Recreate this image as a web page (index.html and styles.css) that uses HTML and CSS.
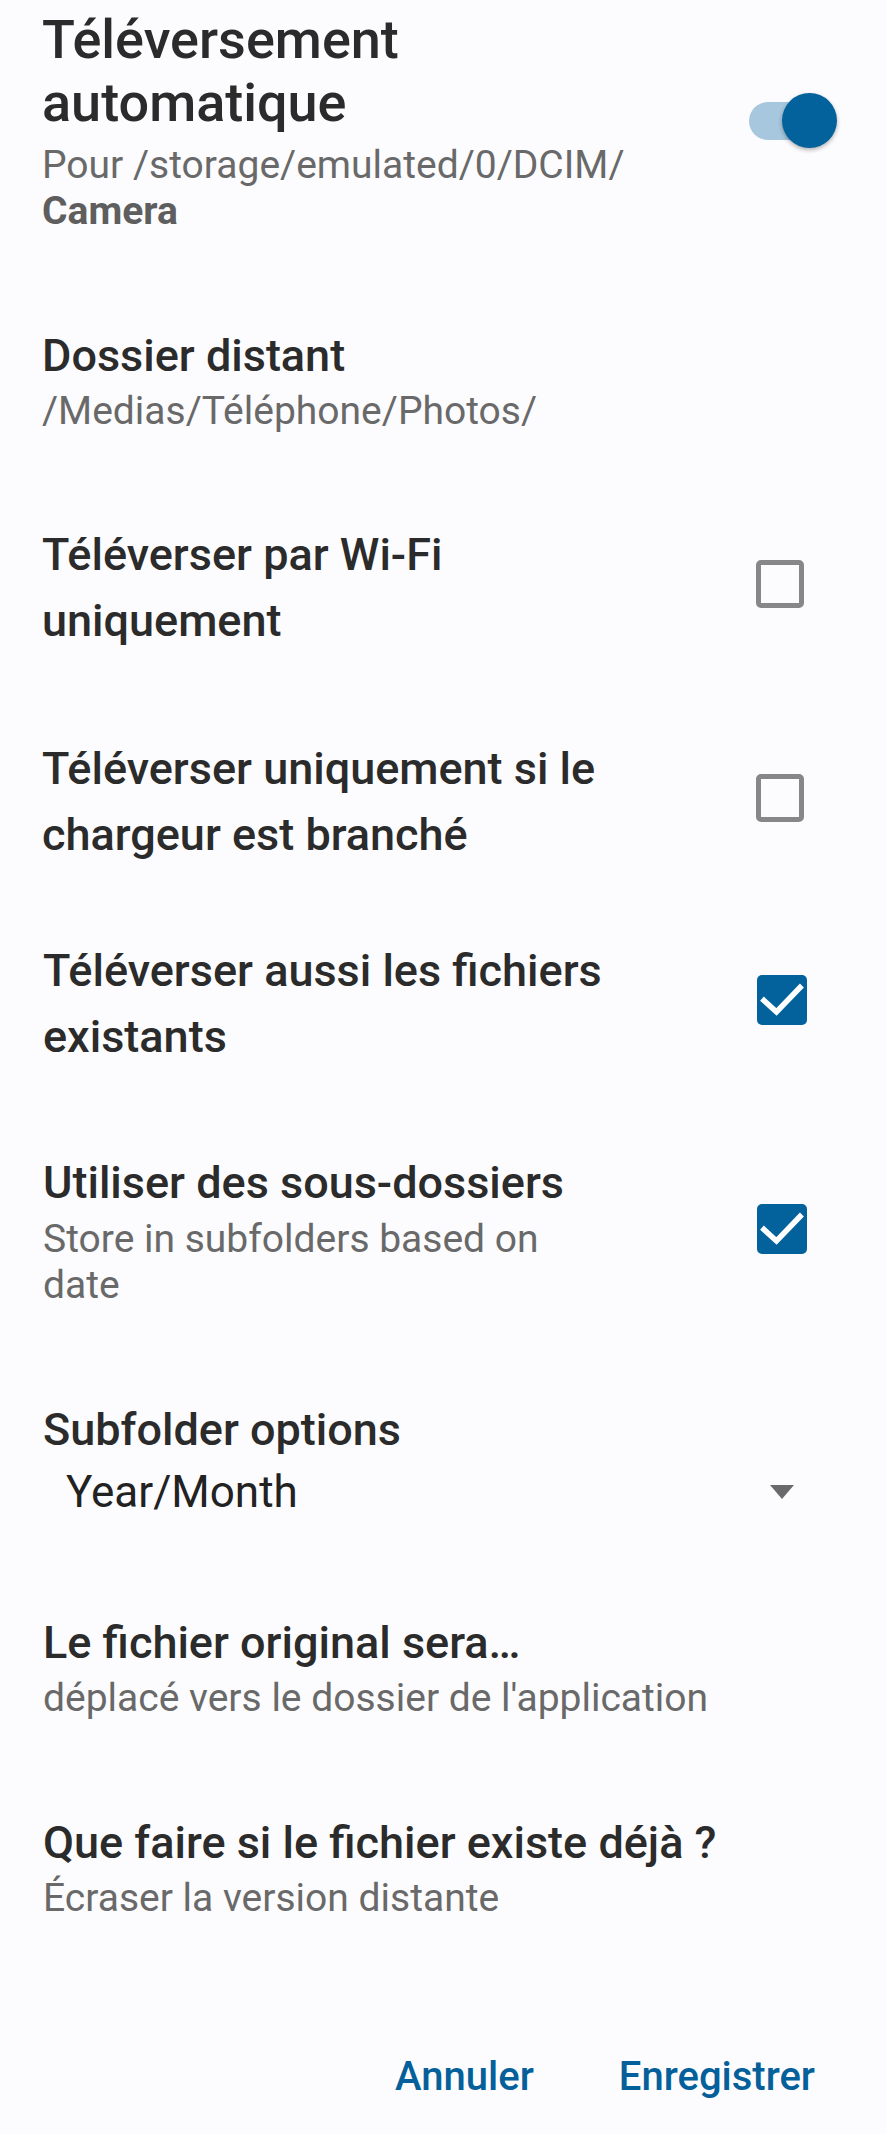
FILE: index.html
```html
<!DOCTYPE html>
<html lang="fr">
<head>
<meta charset="utf-8">
<title>Téléversement automatique</title>
<link rel="stylesheet" href="styles.css">
</head>
<body>
<main class="sheet">
  <section class="item item-head">
    <div class="text">
      <h1 class="big-title">Téléversement<br>automatique</h1>
      <p class="sub sub-head">Pour /storage/emulated/0/DCIM/<br><b>Camera</b></p>
    </div>
    <div class="switch" role="switch" aria-checked="true">
      <span class="track"></span>
      <span class="thumb"></span>
    </div>
  </section>

  <section class="item item-folder">
    <div class="text">
      <h2 class="title">Dossier distant</h2>
      <p class="sub">/Medias/Téléphone/Photos/</p>
    </div>
  </section>

  <section class="item item-check gap-wifi">
    <div class="text">
      <h2 class="title tall">Téléverser par Wi-Fi<br>uniquement</h2>
    </div>
    <span class="box"></span>
  </section>

  <section class="item item-check gap-charge">
    <div class="text">
      <h2 class="title tall">Téléverser uniquement si le<br>chargeur est branché</h2>
    </div>
    <span class="box"></span>
  </section>

  <section class="item item-check item-shift gap-exist">
    <div class="text">
      <h2 class="title tall">Téléverser aussi les fichiers<br>existants</h2>
    </div>
    <span class="box checked">
      <svg viewBox="0 0 50 50" width="50" height="50"><path d="M7 25.5 L19.5 37 L43 12.5" fill="none" stroke="#fff" stroke-width="5.5" stroke-linecap="square"/></svg>
    </span>
  </section>

  <section class="item item-check item-shift gap-sub">
    <div class="text">
      <h2 class="title">Utiliser des sous-dossiers</h2>
      <p class="sub sub-sub">Store in subfolders based on<br>date</p>
    </div>
    <span class="box checked">
      <svg viewBox="0 0 50 50" width="50" height="50"><path d="M7 25.5 L19.5 37 L43 12.5" fill="none" stroke="#fff" stroke-width="5.5" stroke-linecap="square"/></svg>
    </span>
  </section>

  <section class="item item-shift item-spinner">
    <div class="text">
      <h2 class="title">Subfolder options</h2>
      <div class="spinner">
        <span class="spinner-value">Year/Month</span>
        <span class="caret"></span>
      </div>
    </div>
  </section>

  <section class="item item-shift gap-orig">
    <div class="text">
      <h2 class="title">Le fichier original sera…</h2>
      <p class="sub">déplacé vers le dossier de l'application</p>
    </div>
  </section>

  <section class="item item-shift item-folder">
    <div class="text">
      <h2 class="title">Que faire si le fichier existe déjà ?</h2>
      <p class="sub">Écraser la version distante</p>
    </div>
  </section>

  <footer class="actions">
    <button class="btn" type="button">Annuler</button>
    <button class="btn" type="button">Enregistrer</button>
  </footer>
</main>
</body>
</html>
```

FILE: styles.css
```css
html, body {
  margin: 0;
  padding: 0;
  background: #fcfcfe;
}

body {
  font-family: Roboto, "Noto Sans", "Liberation Sans", sans-serif;
  color: #2b2b2b;
  width: 887px;
  min-height: 2134px;
}

.sheet {
  display: flex;
  flex-direction: column;
  padding: 8px 0 0 42px;
}

.item {
  display: flex;
  align-items: center;
  margin-top: 96px;
}

.item-shift {
  padding-left: 1px;
}

.text {
  flex: 1;
  min-width: 0;
}

h1, h2, p {
  margin: 0;
  font-weight: normal;
}

.big-title {
  font-size: 54px;
  line-height: 63px;
  font-weight: 500;
  color: #2b2b2b;
  white-space: nowrap;
}

.title {
  font-size: 45px;
  line-height: 52px;
  font-weight: 500;
  color: #2b2b2b;
  white-space: nowrap;
}

.title.tall {
  line-height: 66px;
}

.sub {
  font-size: 39px;
  line-height: 46px;
  color: #696969;
  margin-top: 6px;
  white-space: nowrap;
}

.sub b {
  font-weight: 700;
  color: #5e5e5e;
}

.sub-head {
  margin-top: 8px;
}

.sub-sub {
  margin-top: 7px;
}

.item-head {
  margin-top: 0;
}

.gap-wifi { margin-top: 88px; }
.gap-charge { margin-top: 82px; }
.gap-exist { margin-top: 70px; }
.gap-sub { margin-top: 87px; }
.gap-orig { margin-top: 99px; }

/* switch */
.switch {
  position: relative;
  width: 94px;
  height: 56px;
  margin-right: 44px;
}

.track {
  position: absolute;
  left: 0;
  top: 9px;
  width: 84px;
  height: 38px;
  border-radius: 19px;
  background: #a7c7de;
}

.thumb {
  position: absolute;
  left: 33px;
  top: 0;
  width: 55px;
  height: 55px;
  border-radius: 50%;
  background: #03629c;
  box-shadow: 0 2px 4px rgba(0, 0, 0, 0.3);
}

/* checkboxes */
.box {
  box-sizing: border-box;
  width: 48px;
  height: 48px;
  border: 5px solid #878787;
  border-radius: 5px;
  margin-right: 83px;
  margin-bottom: 8px;
  flex: none;
}

.box.checked {
  width: 50px;
  height: 50px;
  border: none;
  background: #03629c;
  margin-right: 80px;
  display: flex;
}

.box svg {
  display: block;
}

/* spinner */
.spinner {
  display: flex;
  align-items: center;
  margin-top: 10px;
  padding-left: 23px;
  padding-right: 93px;
}

.spinner-value {
  flex: 1;
  font-size: 44px;
  line-height: 52px;
  color: #222;
}

.caret {
  width: 0;
  height: 0;
  border-left: 12.5px solid transparent;
  border-right: 12.5px solid transparent;
  border-top: 14px solid #6a6a6a;
}

.item-spinner {
  margin-top: 96px;
}

/* actions */
.actions {
  display: flex;
  justify-content: flex-end;
  gap: 85px;
  margin-top: 130px;
  padding-right: 72px;
}

.btn {
  font-family: Roboto, "Noto Sans", "Liberation Sans", sans-serif;
  font-size: 40px;
  line-height: 52px;
  font-weight: 500;
  color: #04609a;
  background: none;
  border: none;
  padding: 0;
  margin: 0;
}
```
